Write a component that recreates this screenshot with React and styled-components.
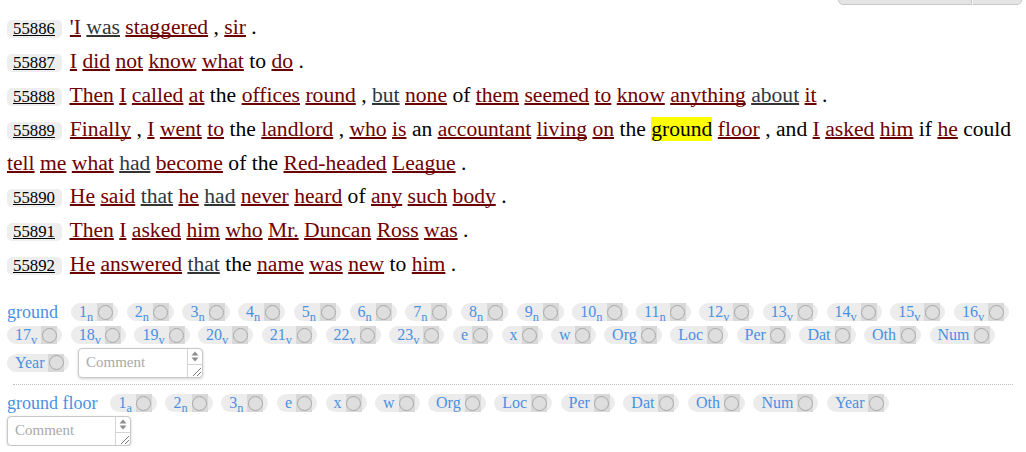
import React from 'react';
import styled, { createGlobalStyle } from 'styled-components';

const GlobalStyle = createGlobalStyle`
  html, body { margin: 0; padding: 0; background: #fff; }
  body { font-family: "Liberation Serif", "Times New Roman", serif; color: #000; }
`;

const Page = styled.div`
  width: 1026px;
`;

const Toolbar = styled.div`
  display: flex;
  justify-content: flex-end;
  align-items: flex-end;
  height: 5px;
  overflow: hidden;
  padding-right: 4px;
`;

const ToolButton = styled.div`
  flex: none;
  width: ${p => p.$w}px;
  height: 20px;
  box-sizing: border-box;
  background: #e4e4e4;
  border: 1px solid #c6c6c6;
  border-left: ${p => (p.$first ? '1px solid #c6c6c6' : '1px solid #fafafa')};
  border-radius: ${p => (p.$first ? '0 0 0 5px' : '0 0 5px 0')};
`;

const Content = styled.div`
  padding: 5.5px 7px 0;
`;

const Sentences = styled.div`
  font-size: 21.6px;
  line-height: 32.4px;
`;

const Sentence = styled.div``;

const Badge = styled.span`
  display: inline-block;
  font-size: 16.8px;
  line-height: 18px;
  padding: 0 7px 0 6px;
  margin: 0 2.5px 7.2px 0;
  background: #eeeeee;
  border-radius: 5px;
  color: #000;
  text-decoration: underline;
  text-decoration-thickness: 1px;
`;

const Word = styled.a`
  color: ${p => (p.$tone === 'g' ? '#2e3844' : '#700000')};
  text-decoration: underline;
  text-decoration-color: ${p => (p.$tone === 'g' ? '#333' : '#6a0000')};
  text-decoration-thickness: 2px;
  text-underline-offset: 1px;
  text-decoration-skip-ink: none;
  cursor: pointer;
`;

const Mark = styled.span`
  background: #ffff00;
  color: #000;
`;

const Annot = styled.div`
  display: flex;
  flex-wrap: wrap;
  align-items: center;
  row-gap: 2px;
  margin-top: ${p => p.$top}px;
`;

const Label = styled.span`
  font-size: 18px;
  line-height: 21px;
  color: #4a90e2;
  margin-right: 13px;
  white-space: nowrap;
`;

const Chip = styled.span`
  display: inline-flex;
  align-items: center;
  height: 18px;
  margin: 1.5px 8.5px 1.5px 0;
  padding: 0 5px 0 8px;
  background: #ececec;
  border-radius: 9px;
  color: #4a90e2;
  font-size: 16px;
  line-height: 18px;
  white-space: nowrap;
`;

const ChipText = styled.span`
  line-height: 18px;
`;

const Sub = styled.span`
  font-size: 12.4px;
  line-height: 0;
  vertical-align: -4px;
`;

const RadioBox = styled.span`
  display: flex;
  align-items: center;
  justify-content: center;
  width: 16px;
  height: 18px;
  margin-left: 4px;
  background: #d9d9d9;
`;

const Radio = styled.span`
  width: 13px;
  height: 13px;
  border-radius: 50%;
  border: 1px solid #a8a8a8;
  background: #dedede;
`;

const CommentBox = styled.div`
  display: flex;
  width: ${p => p.$w}px;
  height: 30px;
  box-sizing: border-box;
  border: 1px solid #c8c8c8;
  border-radius: 4px;
  box-shadow: 0 1px 3px rgba(0, 0, 0, 0.18);
  background: #fff;
  overflow: hidden;
`;

const CommentInput = styled.textarea`
  flex: 1;
  min-width: 0;
  border: 0;
  outline: none;
  resize: none;
  overflow: hidden;
  padding: 5px 7px;
  margin: 0;
  font: 15px "Liberation Serif", serif;
  color: #555;
  background: transparent;
  &::placeholder { color: #a9a9a9; }
`;

const ScrollCol = styled.div`
  width: 14px;
  border-left: 1px solid #d4d4d4;
  display: flex;
  flex-direction: column;
`;

const ScrollArrows = styled.div`
  height: 15px;
  display: flex;
  align-items: center;
  justify-content: center;
  border-bottom: 1px solid #d4d4d4;
`;

const Grip = styled.div`
  flex: 1;
  display: flex;
  align-items: flex-end;
  justify-content: flex-end;
`;

const Separator = styled.div`
  border-top: 1px dotted #c0c0c0;
  margin: 6.5px 6px 7.5px;
`;

const sentences = [
  { id: 55886, t: [["'I", 'r'], ['was', 'g'], ['staggered', 'r'], [','], ['sir', 'r'], ['.']] },
  { id: 55887, t: [['I', 'r'], ['did', 'r'], ['not', 'r'], ['know', 'r'], ['what', 'r'], ['to'], ['do', 'r'], ['.']] },
  {
    id: 55888,
    t: [['Then', 'r'], ['I', 'r'], ['called', 'r'], ['at', 'r'], ['the'], ['offices', 'r'], ['round', 'r'], [','], ['but', 'g'], ['none', 'r'], ['of'], ['them', 'r'], ['seemed', 'r'], ['to', 'r'], ['know', 'r'], ['anything', 'r'], ['about', 'g'], ['it', 'r'], ['.']],
  },
  {
    id: 55889,
    t: [['Finally', 'r'], [','], ['I', 'r'], ['went', 'r'], ['to', 'r'], ['the'], ['landlord', 'r'], [','], ['who', 'r'], ['is', 'r'], ['an'], ['accountant', 'r'], ['living', 'r'], ['on', 'r'], ['the'], ['ground', 'h'], ['floor', 'r'], [','], ['and'], ['I', 'r'], ['asked', 'r'], ['him', 'r'], ['if'], ['he', 'r'], ['could'], ['tell', 'r'], ['me', 'r'], ['what', 'r'], ['had', 'g'], ['become', 'r'], ['of'], ['the'], ['Red-headed', 'r'], ['League', 'r'], ['.']],
  },
  { id: 55890, t: [['He', 'r'], ['said', 'r'], ['that', 'g'], ['he', 'r'], ['had', 'g'], ['never', 'r'], ['heard', 'r'], ['of'], ['any', 'r'], ['such', 'r'], ['body', 'r'], ['.']] },
  { id: 55891, t: [['Then', 'r'], ['I', 'r'], ['asked', 'r'], ['him', 'r'], ['who', 'r'], ['Mr.', 'r'], ['Duncan', 'r'], ['Ross', 'r'], ['was', 'r'], ['.']] },
  { id: 55892, t: [['He', 'r'], ['answered', 'r'], ['that', 'g'], ['the'], ['name', 'r'], ['was', 'r'], ['new', 'r'], ['to'], ['him', 'r'], ['.']] },
];

const groundChips = [
  ['1', 'n'], ['2', 'n'], ['3', 'n'], ['4', 'n'], ['5', 'n'], ['6', 'n'], ['7', 'n'], ['8', 'n'], ['9', 'n'],
  ['10', 'n'], ['11', 'n'], ['12', 'v'], ['13', 'v'], ['14', 'v'], ['15', 'v'], ['16', 'v'], ['17', 'v'],
  ['18', 'v'], ['19', 'v'], ['20', 'v'], ['21', 'v'], ['22', 'v'], ['23', 'v'],
  ['e'], ['x'], ['w'], ['Org'], ['Loc'], ['Per'], ['Dat'], ['Oth'], ['Num'], ['Year'],
];

const floorChips = [
  ['1', 'a'], ['2', 'n'], ['3', 'n'], ['e'], ['x'], ['w'], ['Org'], ['Loc'], ['Per'], ['Dat'], ['Oth'], ['Num'], ['Year'],
];

function Token({ tok }) {
  const [text, tone] = tok;
  if (tone === 'h') return <Mark>{text}</Mark>;
  if (tone) return <Word $tone={tone}>{text}</Word>;
  return <span>{text}</span>;
}

function SentenceRow({ s }) {
  return (
    <Sentence>
      <Badge>{s.id}</Badge>{' '}
      {s.t.map((tok, i) => (
        <React.Fragment key={i}>
          {i > 0 ? ' ' : null}
          <Token tok={tok} />
        </React.Fragment>
      ))}
    </Sentence>
  );
}

function TagChip({ text, sub }) {
  return (
    <Chip>
      <ChipText>
        {text}
        {sub ? <Sub>{sub}</Sub> : null}
      </ChipText>
      <RadioBox>
        <Radio />
      </RadioBox>
    </Chip>
  );
}

function Comment({ w }) {
  return (
    <CommentBox $w={w}>
      <CommentInput placeholder="Comment" rows={1} />
      <ScrollCol>
        <ScrollArrows>
          <svg width="8" height="11" viewBox="0 0 8 11">
            <path d="M4 0.5 L7.5 4.5 L0.5 4.5 Z" fill="#8c8c8c" />
            <path d="M4 10.5 L7.5 6.5 L0.5 6.5 Z" fill="#8c8c8c" />
          </svg>
        </ScrollArrows>
        <Grip>
          <svg width="12" height="12" viewBox="0 0 12 12">
            <path d="M11 3 L3 11 M11 7 L7 11" stroke="#7a7a7a" strokeWidth="1" />
          </svg>
        </Grip>
      </ScrollCol>
    </CommentBox>
  );
}

export default function App() {
  return (
    <Page>
      <GlobalStyle />
      <Toolbar>
        <ToolButton $first $w={134} />
        <ToolButton $w={50} />
      </Toolbar>
      <Content>
        <Sentences>
          {sentences.map(s => (
            <SentenceRow key={s.id} s={s} />
          ))}
        </Sentences>
        <Annot $top={19.6}>
          <Label>ground</Label>
          {groundChips.map(([t, sub], i) => (
            <TagChip key={i} text={t} sub={sub} />
          ))}
          <Comment w={125} />
        </Annot>
        <Separator />
        <Annot $top={0}>
          <Label>ground floor</Label>
          {floorChips.map(([t, sub], i) => (
            <TagChip key={i} text={t} sub={sub} />
          ))}
          <Comment w={124} />
        </Annot>
      </Content>
    </Page>
  );
}
